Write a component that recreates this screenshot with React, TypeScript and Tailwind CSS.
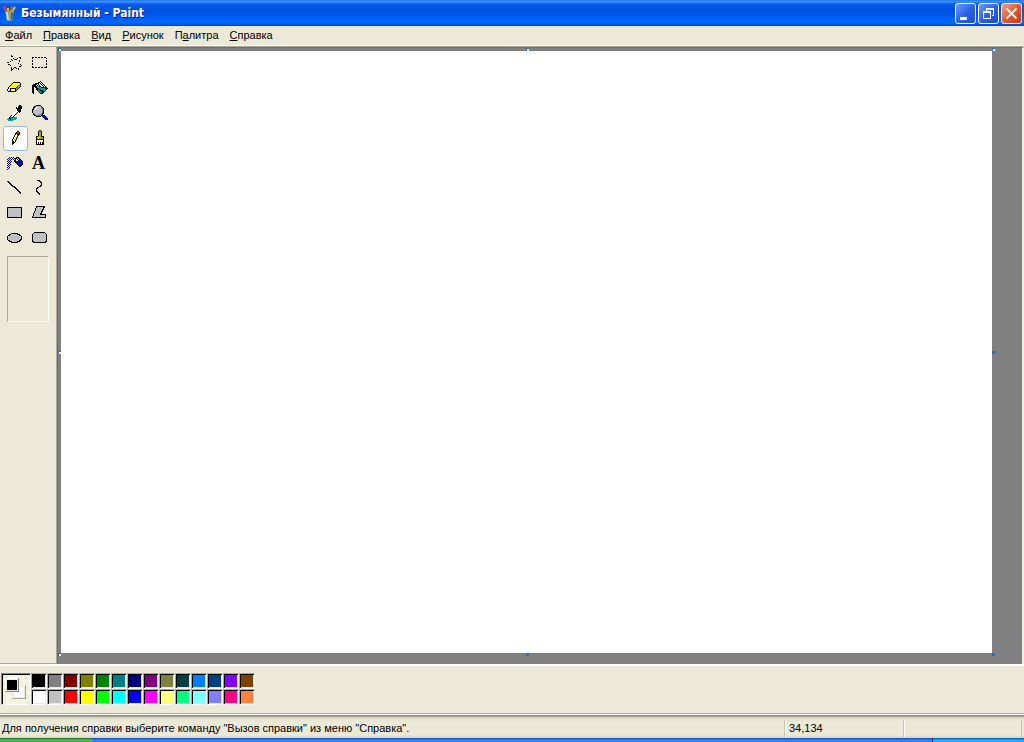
import type { ReactNode } from "react"

const INK: Record<string, string> = {
  k: "#000000",
  w: "#ffffff",
  y: "#ffff00",
  o: "#a0a000",
  t: "#00a8a8",
  b: "#0000ff",
  n: "#000080",
  r: "#ff0000",
  g: "#808080",
  s: "#c0c0c0",
}

function PixelIcon({ rows }: { rows: string[] }) {
  return (
    <svg width="17" height="17" viewBox="0 0 17 17" shapeRendering="crispEdges" aria-hidden="true">
      {rows.flatMap((row, y) =>
        [...row].map((ch, x) =>
          INK[ch] ? <rect key={`${x}-${y}`} x={x} y={y} width="1" height="1" fill={INK[ch]} /> : null
        )
      )}
    </svg>
  )
}

const ICONS = {
  freeSelect: [
    "................",
    "....k...........",
    "....kk..........",
    "............kk..",
    "......k...k..k..",
    "....k..kkk......",
    ".....k......k...",
    "...k........k...",
    "kk..............",
    "...........k....",
    ".kk..........k..",
    "...k..........k.",
    "............kk..",
    "....k..kk.......",
    "....k.k..k.k....",
    "....kk.....k....",
    "....k...........",
  ],
  select: [
    "................",
    "................",
    "................",
    "kk.kk.kk.kk.kk.",
    "k.............k",
    "...............",
    "k.............k",
    "k.............k",
    "...............",
    "k.............k",
    "k.............k",
    "...............",
    "k.............k",
    "kk.kk.kk.kk.kkk",
  ],
  eraser: [
    "................",
    "................",
    "................",
    "......kkkkkkk...",
    ".....kywywywyk..",
    "....kywywywyok..",
    "...kywywywyook..",
    "..kyyyyyyykook..",
    ".kwyyyyyykook...",
    ".kwkkkkkkook....",
    "kwwkyyyykok.....",
    "kwskyyyykk......",
    ".kkkkkkkk.......",
  ],
  fill: [
    "................",
    "................",
    "........k.......",
    "......kkwk......",
    "...kkkkwkwk.....",
    ".kkkk.kwwkwk....",
    "kkkk.kwkwwkwk...",
    "kkkkkttkkwwkwk..",
    "kk.kkttttkkktkk.",
    "kk..kkkttttttkkk",
    "kk..kktkktttttk.",
    "kk...kttkkkttk..",
    "kk....kttkkkk...",
    "kk.....kttkk....",
    ".k......kkk.....",
  ],
  pick: [
    "................",
    "............kk..",
    "...........kkkk.",
    ".........k.kkkk.",
    ".........kkkkkk.",
    "..........kkkk..",
    ".........wkkkk..",
    "........wwwkkk..",
    ".......wwwk.k...",
    "......wwwk......",
    ".....wwwk.......",
    "....kwwk........",
    "...kwwk.........",
    "..kttktttt......",
    ".tkktttttt......",
    "tttkttttt.......",
    ".ttttt..........",
  ],
  zoom: [
    "................",
    "....kkkkk.......",
    "..kksssssk......",
    ".kkswwsssgk.....",
    ".kswwssssggk....",
    "kkswssssssgk....",
    "ksssssssssgk....",
    "ksssssssssgk....",
    "ksssssssssgk....",
    ".ksssssssgkk....",
    ".kkssssgggk.....",
    "..kkgggggkkkn...",
    "....kkkkk.nbbn..",
    "...........nbbn.",
    "............nbbn",
    ".............nbn",
  ],
  pencil: [
    "................",
    "................",
    "..........kk....",
    ".........krrk...",
    "........kkrrk...",
    "........kwkkk...",
    ".......kwyok....",
    ".......kwyk.....",
    "......kwyok.....",
    "......kwyk......",
    ".....kwyok......",
    ".....kwyk.......",
    ".....kkwk.......",
    ".....kkk........",
    ".....kk.........",
    ".....k..........",
  ],
  brush: [
    "................",
    ".......kk.......",
    "......kook......",
    "......kook......",
    "......kook......",
    "......kook......",
    "......kook......",
    "....kkoookkk....",
    "....kyoyoook....",
    "....koyooook....",
    "....kkkkkkkk....",
    "....kwwwwwwk....",
    "....kwwwwwwk....",
    "....kwkwkwkk....",
    "....kwkwkwkk....",
    "....kkkkkkkk....",
  ],
  spray: [
    "................",
    "................",
    "................",
    "..n.n.n..kkk....",
    ".n.n.n.kkkwkk...",
    "n.n.n.n.kwkwkk..",
    ".n.n...kkwwkbbk.",
    "n.n.n..kkkkbbbbk",
    ".n.n....kkkbbbbk",
    "n.n......kkbbbbk",
    ".n.n......kkbbkk",
    "n.n........kkkk.",
    ".n..........kk..",
    "n.n.............",
    ".n..............",
    "n...............",
  ],
  line: [
    "................",
    "................",
    "kk..............",
    ".kk.............",
    "..kk............",
    "...kk...........",
    "....kk..........",
    ".....kkk........",
    ".......kk.......",
    "........kk......",
    ".........kk.....",
    "..........kk....",
    "...........kk...",
    "............kk..",
    ".............k..",
  ],
  curve: [
    "................",
    ".....kkk........",
    ".......kk.......",
    "........kk......",
    ".........k......",
    ".........k......",
    "........kk......",
    ".......kk.......",
    ".....kk.........",
    "....kk..........",
    "....k...........",
    "....k...........",
    "....kk..........",
    ".....kk.........",
    "......kk........",
    ".......k........",
  ],
}

// filled outline shapes share one look
function ShapeIcon({ children }: { children: ReactNode }) {
  return (
    <svg
      width="17"
      height="17"
      viewBox="0 0 17 17"
      fill="#c0c0c0"
      stroke="#000"
      shapeRendering="crispEdges"
      aria-hidden="true"
    >
      {children}
    </svg>
  )
}

const LETTER = (
  <span className="font-['Liberation_Serif',serif] text-lg leading-[18px] font-bold" aria-hidden="true">
    A
  </span>
)

const TOOLS: { name: string; icon: ReactNode }[] = [
  { name: "Выделение произвольной области", icon: <PixelIcon rows={ICONS.freeSelect} /> },
  { name: "Выделение", icon: <PixelIcon rows={ICONS.select} /> },
  { name: "Ластик", icon: <PixelIcon rows={ICONS.eraser} /> },
  { name: "Заливка", icon: <PixelIcon rows={ICONS.fill} /> },
  { name: "Выбор цветов", icon: <PixelIcon rows={ICONS.pick} /> },
  { name: "Масштаб", icon: <PixelIcon rows={ICONS.zoom} /> },
  { name: "Карандаш", icon: <PixelIcon rows={ICONS.pencil} /> },
  { name: "Кисть", icon: <PixelIcon rows={ICONS.brush} /> },
  { name: "Распылитель", icon: <PixelIcon rows={ICONS.spray} /> },
  { name: "Надпись", icon: LETTER },
  { name: "Линия", icon: <PixelIcon rows={ICONS.line} /> },
  { name: "Кривая", icon: <PixelIcon rows={ICONS.curve} /> },
  { name: "Прямоугольник", icon: <ShapeIcon><rect x=".5" y="3.5" width="14" height="10" /></ShapeIcon> },
  { name: "Многоугольник", icon: <ShapeIcon><path d="M4.5 2.5h8l-4 8h5v3H.5z" /></ShapeIcon> },
  { name: "Эллипс", icon: <ShapeIcon><ellipse cx="7.5" cy="9" rx="7" ry="4.5" /></ShapeIcon> },
  { name: "Скругленный прямоугольник", icon: <ShapeIcon><rect x=".5" y="3.5" width="14" height="10" rx="3" /></ShapeIcon> },
]

const COLORS = [
  "#000000", "#808080", "#800000", "#808000", "#008000", "#008080", "#000080",
  "#800080", "#808040", "#004040", "#0080ff", "#004080", "#8000ff", "#804000",
  "#ffffff", "#c0c0c0", "#ff0000", "#ffff00", "#00ff00", "#00ffff", "#0000ff",
  "#ff00ff", "#ffff80", "#00ff80", "#80ffff", "#8080ff", "#ff0080", "#ff8040",
]

// text before the access key, the key, text after it
const MENU = [
  ["", "Ф", "айл"],
  ["", "П", "равка"],
  ["", "В", "ид"],
  ["", "Р", "исунок"],
  ["П", "а", "литра"],
  ["", "С", "правка"],
]

function AppIcon() {
  return (
    <svg width="16" height="16" viewBox="0 0 16 16" aria-hidden="true">
      <path d="M2 1l3 7" stroke="#d8442c" strokeWidth="2" />
      <path d="M6 0v7" stroke="#5b4a3a" strokeWidth="2" />
      <path d="M6 3v3" stroke="#e8b23c" strokeWidth="2" />
      <path d="M13 2L9 8" stroke="#e5c43c" strokeWidth="2" />
      <path d="M10 1L8 7" stroke="#c9772b" strokeWidth="1" />
      <path d="M3 6h9l-2 10H5z" fill="#6f9b8c" />
      <path d="M4 7h2l1 8H5z" fill="#bfe0d0" />
      <path d="M7 6h2l-1 9H7z" fill="#d98d2c" />
      <path d="M9 8h2l-1 6H9z" fill="#345f6b" />
    </svg>
  )
}

function TitleBar() {
  const button =
    "flex size-[21px] items-center justify-center rounded-[3px] border border-white bg-gradient-to-br from-[#6f9bf5] via-[#2e63e6] to-[#1a4cd0]"
  return (
    <header className="flex h-[26px] items-center bg-[linear-gradient(#1c6fe8_0%,#3a93ff_6%,#0a5bec_16%,#0052e0_36%,#0058f0_60%,#0066ff_82%,#0062f8_92%,#0040c0_100%)] pr-0.5 pl-0.5">
      <AppIcon />
      <h1 className="ml-[3px] flex-1 font-['DejaVu_Sans_Condensed','DejaVu_Sans',sans-serif] text-xs font-bold text-white [text-shadow:1px_1px_#0a1c83]">
        Безымянный - Paint
      </h1>
      <div className="flex gap-0.5">
        <button className={button} aria-label="Свернуть">
          <svg width="19" height="19" viewBox="0 0 19 19" shapeRendering="crispEdges">
            <rect x="4" y="13" width="7" height="3" fill="#fff" />
          </svg>
        </button>
        <button className={button} aria-label="Восстановить">
          <svg width="19" height="19" viewBox="0 0 19 19" fill="#fff" shapeRendering="crispEdges">
            <path d="M7 4h8v8h-2v-1h1V6H8v1H7z" />
            <path d="M4 7h8v8H4zM5 9v5h6V9z" fillRule="evenodd" />
          </svg>
        </button>
        <button
          className="flex size-[21px] items-center justify-center rounded-[3px] border border-white bg-gradient-to-br from-[#f0a088] via-[#e2572f] to-[#c8380e]"
          aria-label="Закрыть"
        >
          <svg width="19" height="19" viewBox="0 0 19 19" stroke="#fff" strokeWidth="2">
            <path d="M4.5 4.5l10 10M14.5 4.5l-10 10" />
          </svg>
        </button>
      </div>
    </header>
  )
}

function MenuBar() {
  return (
    <nav className="flex h-5 gap-[11px] border-b border-white pl-[5px]">
      {MENU.map(([before, key, after]) => (
        <button key={key + after} className="flex h-[18px] items-center">
          <span>
            {before}
            <span className="underline underline-offset-1">{key}</span>
            {after}
          </span>
        </button>
      ))}
    </nav>
  )
}

function ToolBox() {
  return (
    <aside className="flex w-[57px] shrink-0 flex-col border-r border-b border-[#aca899] pt-1 pl-[3px]">
      <div className="grid grid-cols-[25px_25px]">
        {TOOLS.map(({ name, icon }) => (
          <button
            key={name}
            aria-label={name}
            aria-pressed={name === "Карандаш"}
            className="flex size-[25px] items-start rounded-[3px] border border-transparent pt-0.5 pl-[3px] aria-pressed:border-[#98b5e2] aria-pressed:bg-white"
          >
            {icon}
          </button>
        ))}
      </div>
      <div className="mt-[5px] ml-1 h-[66px] w-[42px] border border-t-[#aca899] border-r-white border-b-white border-l-[#aca899]" />
    </aside>
  )
}

// top and left grips are hollow, the ones that resize are solid
function Canvas() {
  const hollow = "absolute size-[3px] border-t border-l border-[#316ac5] bg-white"
  const solid = "absolute size-[3px] bg-[#316ac5]"
  return (
    <main className="flex flex-1 border-t border-r-2 border-l border-t-[#716f64] border-r-[#f1efe2] border-l-[#716f64] bg-[#808080] pt-[3px] pr-[30px] pb-[11px] pl-[3px]">
      <div className="relative flex-1 bg-white">
        <i className={`${hollow} -top-[3px] -left-[3px]`} />
        <i className={`${hollow} -top-[3px] left-1/2 -ml-px`} />
        <i className={`${hollow} -top-[3px] -right-[3px]`} />
        <i className={`${hollow} top-1/2 -left-[3px] -mt-px`} />
        <i className={`${solid} top-1/2 -right-[3px] -mt-px`} />
        <i className={`${hollow} -bottom-[3px] -left-[3px]`} />
        <i className={`${solid} -bottom-[3px] left-1/2 -ml-px`} />
        <i className={`${solid} -right-[3px] -bottom-[3px]`} />
      </div>
    </main>
  )
}

function Palette() {
  return (
    <section className="flex h-[49px] items-start border-t-2 border-white pt-[7px] pl-px">
      <div className="flex h-8 w-[30px] items-start border border-t-[#808080] border-r-white border-b-white border-l-[#808080] bg-[repeating-conic-gradient(#ffffff_0_25%,#ece9d8_0_50%)] bg-[length:2px_2px] pt-1 pl-[3px] shadow-[inset_1px_1px_#000]">
        <div className="relative">
          <div className="mt-[7px] ml-[7px] size-[14px] border border-t-[#f1efe2] border-r-[#aca899] border-b-[#aca899] border-l-[#f1efe2] bg-white ring-1 ring-[#ece9d8] ring-inset" />
          <div className="absolute top-0 left-0 size-[14px] border border-t-white border-r-[#808080] border-b-[#808080] border-l-white bg-black ring-1 ring-[#ece9d8] ring-inset" />
        </div>
      </div>
      <div className="grid grid-cols-[repeat(14,16px)]">
        {COLORS.map((color) => (
          <button
            key={color}
            aria-label={color}
            className="h-4 border border-t-[#aca899] border-r-white border-b-white border-l-[#aca899] shadow-[inset_1px_1px_#000,inset_-1px_-1px_#ece9d8]"
            style={{ backgroundColor: color }}
          />
        ))}
      </div>
    </section>
  )
}

function StatusBar() {
  return (
    <footer className="border-t border-[#aca899]">
      <div className="flex h-6 items-center border-t border-white bg-[linear-gradient(#8b897e_0_1px,#c9c6b5_2px,#e6e2cf_4px,#ece9d8_7px,#ece9d8_20px,#d8d4c0)] pt-1">
        <p className="flex-1 pl-0.5">Для получения справки выберите команду "Вызов справки" из меню "Справка".</p>
        <p className="flex h-[17px] w-[119px] items-center border-l border-[#c5c2b0] pl-1 shadow-[inset_1px_0_#fff]">34,134</p>
        <p className="h-[17px] w-[119px] border-x border-[#c5c2b0] shadow-[inset_1px_0_#fff]" />
        <span className="w-0.5" />
      </div>
    </footer>
  )
}

function Taskbar() {
  return (
    <div className="flex h-1 bg-[linear-gradient(#1f52d0_0_1px,#3f8cf0_2px,#2f74e0)]">
      <div className="w-[93px] rounded-tr-sm bg-[linear-gradient(#2f7a2f_0_1px,#6cc06c_2px,#3c9a3c)]" />
      <div className="flex-1" />
      <div className="w-[92px] border-l border-[#0a3a90] bg-[linear-gradient(#1560c8_0_1px,#1cc0f8_2px,#12a8ee)]" />
    </div>
  )
}

export default function App() {
  return (
    <div className="flex h-screen flex-col overflow-hidden bg-[#ece9d8] font-['Liberation_Sans',Arial,sans-serif] text-[11px] leading-[13px] text-black">
      <TitleBar />
      <MenuBar />
      <div className="flex flex-1 border-t border-[#aca899]">
        <ToolBox />
        <Canvas />
      </div>
      <Palette />
      <StatusBar />
      <Taskbar />
    </div>
  )
}
